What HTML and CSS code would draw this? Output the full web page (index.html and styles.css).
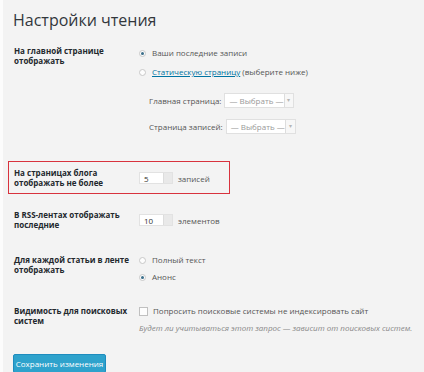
FILE: index.html
```html
<!DOCTYPE html>
<html lang="ru">
<head>
    <meta charset="UTF-8">
    <title>Настройки чтения</title>
    <link rel="stylesheet" href="styles.css">
</head>
<body>
    <div class="wrap">
        <h1 class="title">Настройки чтения</h1>

        <div class="form-table">
            <!-- главная страница -->
            <div class="row row-front">
                <div class="label">На главной странице отображать</div>
                <div class="field">
                    <label class="opt"><span class="radio checked"></span>Ваши последние записи</label>
                    <label class="opt"><span class="radio"></span><a href="#">Статическую страницу</a>&nbsp;(выберите ниже)</label>
                    <div class="sub">
                        <div class="sub-row">Главная страница: <span class="select">— Выбрать —<span class="arrow">▾</span></span></div>
                        <div class="sub-row">Страница записей: <span class="select">— Выбрать —<span class="arrow">▾</span></span></div>
                    </div>
                </div>
            </div>

            <!-- записей на странице -->
            <div class="row row-posts highlight">
                <div class="label">На страницах блога отображать не более</div>
                <div class="field inline">
                    <span class="number">5<span class="spin"></span></span>записей
                </div>
            </div>

            <div class="row row-rss">
                <div class="label">В RSS-лентах отображать последние</div>
                <div class="field inline">
                    <span class="number">10<span class="spin"></span></span>элементов
                </div>
            </div>

            <div class="row row-feed">
                <div class="label">Для каждой статьи в ленте отображать</div>
                <div class="field">
                    <label class="opt"><span class="radio"></span>Полный текст</label>
                    <label class="opt"><span class="radio checked"></span>Анонс</label>
                </div>
            </div>

            <div class="row row-search">
                <div class="label">Видимость для поисковых систем</div>
                <div class="field">
                    <label class="opt"><span class="checkbox"></span>Попросить поисковые системы не индексировать сайт</label>
                    <p class="description">Будет ли учитываться этот запрос — зависит от поисковых систем.</p>
                </div>
            </div>
        </div>

        <button class="submit-btn">Сохранить изменения</button>
    </div>
</body>
</html>
```

FILE: styles.css
```css
body {
    margin: 0;
    background-color: #f3f3f3;
    font-family: 'Open Sans', 'Noto Sans', sans-serif;
    font-size: 8px;
    color: #555;
    border-left: 3px solid #fcfcfc;
    height: 372px;
    overflow: hidden;
}

.wrap {
    padding-left: 10px;
}

/* заголовок */
.title {
    font-size: 16px;
    font-weight: 400;
    color: #32373c;
    margin: 0;
    padding-top: 9px;
    line-height: 22px;
}

.form-table {
    margin-top: 14px;
}

.row {
    display: flex;
    width: 210px;
    margin-left: -5px;
    padding: 0 5px;
    border: 1px solid transparent;
}

.label {
    width: 125px;
    flex-shrink: 0;
    font-weight: 700;
    color: #23282d;
    line-height: 10px;
    padding-right: 6px;
    box-sizing: border-box;
}

.field {
    flex: 1;
    white-space: nowrap;
}

.opt {
    display: flex;
    align-items: center;
    height: 10px;
    line-height: 10px;
}

.opt a {
    color: #0074a2;
}

.radio {
    width: 7px;
    height: 7px;
    border: 1px solid #c8c8c8;
    border-radius: 50%;
    background: #fdfdfd;
    margin-right: 6px;
    box-sizing: border-box;
    position: relative;
    flex-shrink: 0;
}

.radio.checked:after {
    content: '';
    position: absolute;
    left: 1px;
    top: 1px;
    width: 3px;
    height: 3px;
    border-radius: 50%;
    background: #3b6e8a;
}

.checkbox {
    width: 9px;
    height: 9px;
    border: 1px solid #c0c0c0;
    background: #fdfdfd;
    margin-right: 5px;
    box-sizing: border-box;
    flex-shrink: 0;
}

/* выбор страниц */
.row-front .field {
    padding-top: 2px;
}

.row-front .opt + .opt {
    margin-top: 9px;
}

.sub {
    padding: 16px 0 0 10px;
}

.sub-row {
    display: flex;
    align-items: center;
    height: 14px;
}

.sub-row + .sub-row {
    margin-top: 12px;
}

.select {
    display: inline-flex;
    align-items: center;
    justify-content: space-between;
    width: 70px;
    margin-left: 3px;
    height: 15px;
    padding-left: 4px;
    border: 1px solid #e0e0e0;
    background: #fff;
    color: #999;
    box-sizing: border-box;
}

.arrow {
    width: 9px;
    height: 13px;
    border-left: 1px solid #ddd;
    background: #f7f7f7;
    color: #b5b5b5;
    font-size: 6px;
    text-align: center;
    line-height: 13px;
}

/* записей на странице */
.row-posts {
    margin-top: 27px;
    padding-top: 6px;
    padding-bottom: 5px;
}

.highlight {
    border-color: #d8323d;
}

.inline {
    display: flex;
    align-items: center;
    height: 20px;
}

.number {
    display: inline-flex;
    align-items: center;
    justify-content: space-between;
    width: 34px;
    height: 12px;
    padding-left: 4px;
    margin-right: 5px;
    border: 1px solid #e2e2e2;
    background: #fff;
    color: #333;
    box-sizing: border-box;
}

.spin {
    width: 8px;
    height: 10px;
    background: #e9e9e9;
    border-left: 1px solid #ddd;
}

.row-rss {
    margin-top: 15px;
}

.row-feed {
    margin-top: 23px;
}

.row-feed .opt + .opt {
    margin-top: 7px;
}

.row-search {
    margin-top: 22px;
}

.description {
    margin: 7px 0 0 0;
    line-height: 10px;
    font-style: italic;
    color: #888;
    font-size: 8px;
}

/* кнопка */
.submit-btn {
    display: block;
    margin-top: 20px;
    background-color: #2ea2cc;
    border: 1px solid #1e8cbe;
    color: #fff;
    font-family: 'Open Sans', sans-serif;
    font-size: 8px;
    height: 19px;
    width: 93px;
    padding: 0;
    border-radius: 2px;
}
```
